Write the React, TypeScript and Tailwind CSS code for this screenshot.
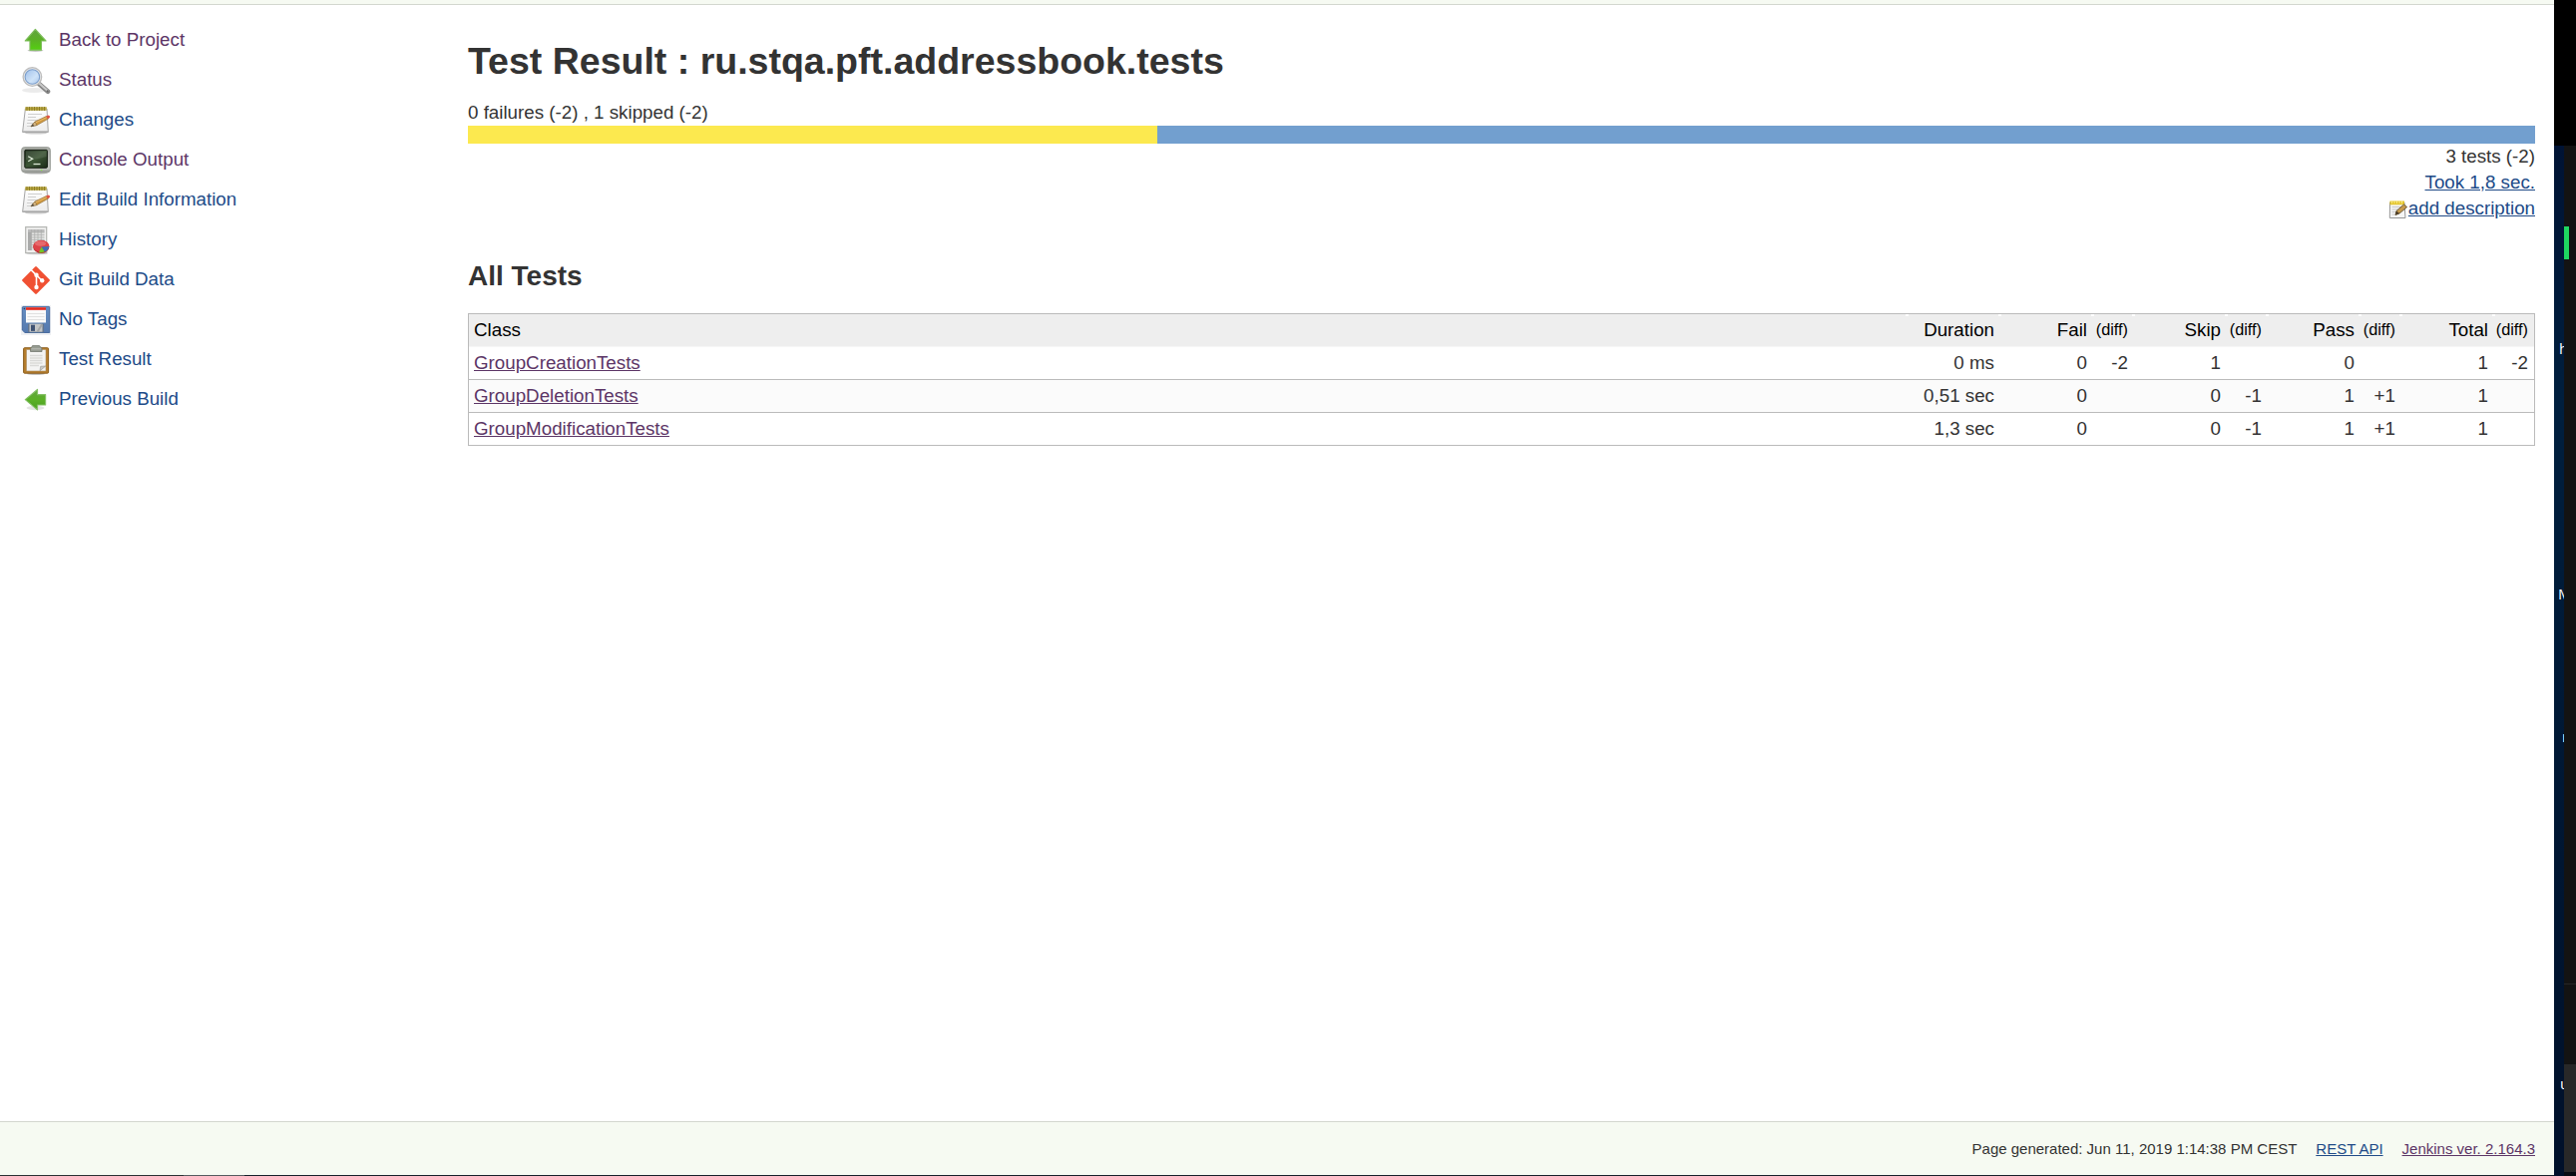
import React from "react";

function ArrowShape({ left = false }: { left?: boolean }) {
  return (
    <svg viewBox="0 0 30 30" className="block h-[30px] w-[30px]">
      <defs>
        <linearGradient id={left ? "gl" : "gu"} x1="0" y1="0" x2="0" y2="1">
          <stop offset="0" stopColor="#62a340" />
          <stop offset="0.5" stopColor="#5bb026" />
          <stop offset="1" stopColor={left ? "#4a9f22" : "#54d010"} />
        </linearGradient>
      </defs>
      <ellipse cx="14.5" cy={left ? 23 : 24.6} rx={left ? 9 : 8} ry={left ? 2.2 : 1.3} fill="#000" opacity={left ? 0.1 : 0.22} />
      {left ? (
        <path d="M4.3 14.6 L16.5 4.5 V9.6 H24.6 V20 H16.5 V24.9 Z" fill="url(#gl)" stroke="#86c167" strokeWidth="1.2" strokeLinejoin="round" />
      ) : (
        <path d="M14.4 3.4 L25 15 H20.4 V24.2 H9 V15 H4.3 Z" fill="url(#gu)" stroke="#7dbd5b" strokeWidth="1.2" strokeLinejoin="round" />
      )}
    </svg>
  );
}

function SearchIcon() {
  return (
    <svg viewBox="0 0 30 30" className="block h-[30px] w-[30px]">
      <defs>
        <linearGradient id="lens" x1="0" y1="0" x2="1" y2="1">
          <stop offset="0" stopColor="#9fc0ea" />
          <stop offset="0.6" stopColor="#cfe3f8" />
          <stop offset="1" stopColor="#a8c6ec" />
        </linearGradient>
      </defs>
      <ellipse cx="13" cy="24.5" rx="12" ry="2.4" fill="#000" opacity="0.08" />
      <path d="M17.5 17.5 L27 25.8" stroke="#868686" strokeWidth="4.6" strokeLinecap="round" />
      <path d="M18 17.2 L26.5 24.7" stroke="#c9c9c9" strokeWidth="2.2" strokeLinecap="round" />
      <circle cx="26.6" cy="25.3" r="1" fill="#666" />
      <circle cx="11.4" cy="11" r="9.3" fill="#e9e9e9" stroke="#bdbdbd" strokeWidth="1.3" />
      <circle cx="11.4" cy="11" r="7.3" fill="url(#lens)" stroke="#7c9fcc" strokeWidth="1.1" />
    </svg>
  );
}

function NotepadIcon() {
  return (
    <svg viewBox="0 0 30 30" className="block h-[30px] w-[30px]">
      <defs>
        <linearGradient id="pad" x1="0" y1="0" x2="0" y2="1">
          <stop offset="0" stopColor="#ffffff" />
          <stop offset="1" stopColor="#ececec" />
        </linearGradient>
      </defs>
      <ellipse cx="15" cy="27.4" rx="11" ry="1.2" fill="#000" opacity="0.2" />
      <path d="M4.4 3 H26 L27.3 26.5 H1.6 Z" fill="url(#pad)" stroke="#a5a5a5" strokeWidth="1" />
      <path d="M2 25.6 H27" stroke="#bdbdbd" strokeWidth="1" />
      <path d="M7 8.5 H21 M7 11.5 H15 M6.5 14.5 H17 M6 17.5 H12 M6 20.5 H11" stroke="#cfcfcf" strokeWidth="1.1" />
      <rect x="4.3" y="1.2" width="21.4" height="3.6" fill="#b8a53f" />
      <path d="M6 1 V5 M8.5 1 V5 M11 1 V5 M13.5 1 V5 M16 1 V5 M18.5 1 V5 M21 1 V5 M23.5 1 V5" stroke="#81731f" strokeWidth="0.8" />
      <path d="M10 20.8 L14 16 L25.4 10.6 L27.4 13.1 L16 19.5 Z" fill="#d19a3f" stroke="#87632c" strokeWidth="0.6" />
      <path d="M14.5 17 L26 11.5" stroke="#edc27a" strokeWidth="0.8" />
      <path d="M10 20.8 L14 16 L16 19.5 Z" fill="#d9b985" stroke="#77613c" strokeWidth="0.5" />
      <path d="M10 20.8 L12 18.3 L13 20.3 Z" fill="#444" />
      <path d="M25 10.4 L27.6 9.4 Q29.8 10.3 28.8 12 L27 13.2 Z" fill="#e05343" />
    </svg>
  );
}

function ConsoleIcon() {
  return (
    <svg viewBox="0 0 30 30" className="block h-[30px] w-[30px]">
      <defs>
        <linearGradient id="scr" x1="0" y1="0" x2="1" y2="1">
          <stop offset="0" stopColor="#20301e" />
          <stop offset="0.5" stopColor="#3c5535" />
          <stop offset="1" stopColor="#1c2b18" />
        </linearGradient>
        <linearGradient id="bez" x1="0" y1="0" x2="0" y2="1">
          <stop offset="0" stopColor="#a9aca6" />
          <stop offset="0.85" stopColor="#c8cac5" />
          <stop offset="1" stopColor="#858883" />
        </linearGradient>
      </defs>
      <ellipse cx="15" cy="27.3" rx="12" ry="1.2" fill="#000" opacity="0.3" />
      <rect x="0.6" y="1.6" width="28.8" height="25.2" rx="3" fill="url(#bez)" stroke="#959893" strokeWidth="0.9" />
      <rect x="3.8" y="4.3" width="22.6" height="18" rx="1" fill="url(#scr)" stroke="#141c12" strokeWidth="1" />
      <path d="M5 5.5 H25.5 V11 Q17 14 5 14 Z" fill="#fff" opacity="0.1" />
      <path d="M7.2 10.8 L11.6 13.2 L7.2 15.7" fill="none" stroke="#dbe8d5" strokeWidth="1.3" />
      <path d="M12.5 18.5 H19.5" stroke="#dbe8d5" strokeWidth="1.3" />
      <circle cx="20.6" cy="24.5" r="0.8" fill="#8ce54a" />
    </svg>
  );
}

function HistoryIcon() {
  return (
    <svg viewBox="0 0 30 30" className="block h-[30px] w-[30px]">
      <ellipse cx="16" cy="28" rx="11" ry="1.3" fill="#000" opacity="0.18" />
      <rect x="4.7" y="1.6" width="21" height="26" fill="#f0f0ef" stroke="#b4b6b2" strokeWidth="1.2" />
      <rect x="7" y="4" width="16.5" height="21" fill="#e2e2e1" />
      <rect x="7" y="4" width="3.5" height="21" fill="#aaa" />
      <rect x="7" y="4" width="16.5" height="3" fill="#bcbcbc" />
      <path d="M7 7 H23.5 M7 9.5 H23.5 M7 12 H23.5 M7 14.5 H23.5 M7 17 H23.5 M7 19.5 H23.5 M7 22 H23.5 M10.5 4 V25 M13.7 4 V25 M17 4 V25 M20.3 4 V25" stroke="#aaacab" strokeWidth="0.7" />
      <ellipse cx="20.3" cy="21.5" rx="8" ry="6.4" fill="#b32428" />
      <ellipse cx="20.3" cy="20.7" rx="8" ry="6" fill="#dd4348" />
      <ellipse cx="19.5" cy="18.2" rx="5.5" ry="2.6" fill="#ef8386" opacity="0.6" />
      <path d="M20.5 21.5 L28.2 21 Q28 25 23.5 26.6 Z" fill="#3f6eb4" />
      <path d="M20.5 21.5 L23.6 26.6 Q20.5 28 18 27 Z" fill="#74c425" />
    </svg>
  );
}

function GitIcon() {
  return (
    <svg viewBox="0 0 30 30" className="block h-[30px] w-[30px]">
      <rect x="4.8" y="4.8" width="20.4" height="20.4" rx="1.2" fill="#f05133" transform="rotate(45 15 15)" />
      <path d="M10.2 4.7 L15.5 9.8 V22 M15.5 9.8 L21 15.2" fill="none" stroke="#fff" strokeWidth="1.6" />
      <circle cx="15.5" cy="9.8" r="2.2" fill="#fff" />
      <circle cx="15.5" cy="22" r="2.2" fill="#fff" />
      <circle cx="21.2" cy="15.2" r="2.2" fill="#fff" />
    </svg>
  );
}

function FloppyIcon() {
  return (
    <svg viewBox="0 0 30 30" className="block h-[30px] w-[30px]">
      <defs>
        <linearGradient id="fl" x1="0" y1="0" x2="0" y2="1">
          <stop offset="0" stopColor="#668ec2" />
          <stop offset="1" stopColor="#5579ae" />
        </linearGradient>
      </defs>
      <rect width="30" height="30" fill="#eef0f3" />
      <path d="M2 1.4 H28 Q28.7 1.4 28.7 2.2 V27.5 H4 L1.3 25 V2 Z" fill="url(#fl)" stroke="#42659b" strokeWidth="0.9" />
      <rect x="5" y="2" width="20" height="15.5" fill="#fafafa" />
      <rect x="5" y="2.2" width="20" height="2.6" fill="#e3291c" />
      <path d="M6.5 8.5 H23.5 M6.5 11.5 H23.5 M6.5 14.5 H23.5" stroke="#dedede" strokeWidth="0.9" />
      <circle cx="3.4" cy="3.5" r="0.8" fill="#263c5f" />
      <rect x="7" y="18.7" width="16" height="8.6" fill="#62748d" />
      <rect x="8.5" y="18.7" width="13" height="8" fill="#c4c6c7" />
      <rect x="10" y="19.7" width="4" height="6.2" fill="#3f5273" />
      <path d="M16.5 26.7 L21 19.2" stroke="#a3a5a6" strokeWidth="2" />
    </svg>
  );
}

function ClipboardIcon() {
  return (
    <svg viewBox="0 0 30 30" className="block h-[30px] w-[30px]">
      <ellipse cx="15" cy="28.8" rx="9" ry="1" fill="#000" opacity="0.3" />
      <rect x="2.6" y="2.7" width="25" height="25.5" rx="1" fill="#b67d2c" stroke="#8d6022" strokeWidth="1" />
      <path d="M5.5 4.5 H25 V26 H5.5 Z" fill="#f4f4f3" stroke="#a98d62" strokeWidth="0.6" />
      <path d="M9 10.5 H21.5 M9 13 H21.5 M9 15.5 H21.5 M9 18 H21.5 M9 20.5 H18" stroke="#dadad8" strokeWidth="1.7" />
      <path d="M19 25.8 L19.7 21.2 L24.8 21 Z" fill="#c8c8c5" stroke="#898985" strokeWidth="0.5" />
      <path d="M9.5 6.5 V3.5 Q9.5 2 11 2 L11.5 0.6 H18.5 L19.5 2 Q21 2 21 3.5 V6.5 Z" fill="#979c92" stroke="#73786f" strokeWidth="0.8" />
      <path d="M10.5 3.8 H20" stroke="#babdb6" strokeWidth="1" />
    </svg>
  );
}

function SmallNoteIcon() {
  return (
    <svg viewBox="0 0 20 20" className="block h-5 w-5">
      <path d="M1.5 3 H16 L17 18.5 H1.3 Z" fill="#f5f5f5" stroke="#979797" strokeWidth="1" />
      <path d="M3.5 7.5 H13 M3.5 10 H10 M3.5 12.5 H8 M3.5 15 H7" stroke="#c9c9c9" />
      <rect x="1.5" y="1.5" width="14.5" height="3.8" fill="#e3c52d" />
      <path d="M3.5 1.3 V4 M6 1.3 V4 M8.5 1.3 V4 M11 1.3 V4 M13.5 1.3 V4" stroke="#fff3a1" strokeWidth="0.8" />
      <path d="M7 15.5 L8 11.5 L15.5 5 L18.6 7.6 L11 14 Z" fill="#c79a4b" stroke="#62502f" strokeWidth="0.9" />
      <path d="M7 15.5 L8 11.5 L11 14 Z" fill="#4a3b27" />
    </svg>
  );
}

const tasks = [
  { label: "Back to Project", icon: <ArrowShape />, visited: true },
  { label: "Status", icon: <SearchIcon />, visited: true },
  { label: "Changes", icon: <NotepadIcon />, visited: false },
  { label: "Console Output", icon: <ConsoleIcon />, visited: true },
  { label: "Edit Build Information", icon: <NotepadIcon />, visited: false },
  { label: "History", icon: <HistoryIcon />, visited: false },
  { label: "Git Build Data", icon: <GitIcon />, visited: false },
  { label: "No Tags", icon: <FloppyIcon />, visited: false },
  { label: "Test Result", icon: <ClipboardIcon />, visited: false },
  { label: "Previous Build", icon: <ArrowShape left />, visited: false },
];

const headers = ["Class", "Duration", "Fail", "(diff)", "Skip", "(diff)", "Pass", "(diff)", "Total", "(diff)"];

const rows = [
  ["GroupCreationTests", "0 ms", "0", "-2", "1", "", "0", "", "1", "-2"],
  ["GroupDeletionTests", "0,51 sec", "0", "", "0", "-1", "1", "+1", "1", ""],
  ["GroupModificationTests", "1,3 sec", "0", "", "0", "-1", "1", "+1", "1", ""],
];

const columns = "grid grid-cols-[1fr_93px_93px_41px_93px_41px_93px_41px_93px_40px]";

const notch =
  "relative before:absolute before:-left-[2px] before:top-0 before:h-[2px] before:w-[3px] before:bg-white before:content-['']";

function ResultsTable() {
  return (
    <div className="mt-5 border border-[#bbb] text-[#333]">
      <div className={`${columns} h-[33px] border-b border-[#f6f6f6] bg-[#eee] leading-[31px] text-black`}>
        {headers.map((h, i) => (
          <div
            key={i}
            className={
              i === 0
                ? "pl-[5px]"
                : h === "(diff)"
                  ? `${notch} pr-[6px] text-right text-[16.25px]`
                  : `${notch} pr-[6px] text-right`
            }
          >
            {h}
          </div>
        ))}
      </div>
      {rows.map((row, r) => (
        <div
          key={row[0]}
          className={`${columns} leading-[31px] ${r < 2 ? "h-[33px] border-b border-[#bbb]" : "h-[32px]"} ${r === 1 ? "bg-[#fbfbfb]" : ""}`}
        >
          {row.map((c, i) =>
            i === 0 ? (
              <div key={i} className="pl-[5px]">
                <a className="text-[#5c3566] underline">{c}</a>
              </div>
            ) : (
              <div key={i} className="pr-[6px] text-right">
                {c}
              </div>
            ),
          )}
        </div>
      ))}
    </div>
  );
}

function DesktopEdge() {
  return (
    <div className="flex h-[1179px] w-[22px] flex-col bg-[#02112a]">
      <div className="h-[146px] bg-black" />
      <div className="flex flex-1">
        <div className="relative w-[10px] overflow-hidden bg-linear-to-b from-[#001334] via-[#001f3e] via-25% to-[#00102a] font-['Open_Sans',sans-serif] text-[15px] leading-[20px] text-white">
          <span className="absolute left-[5px] top-[193px]">h</span>
          <span className="absolute left-[4px] top-[439px]">M</span>
          <span className="absolute left-[8px] top-[582px]">r</span>
          <span className="absolute left-[6px] top-[930px]">u</span>
        </div>
        <div className="flex w-[12px] flex-col bg-[#131313]">
          <div className="mt-[81px] h-[33px] w-[5px] bg-[#1ed760]" />
          <div className="mt-[726px] h-px bg-[#282828]" />
          <div className="mt-20 h-[108px] bg-[#282828]" />
          <div className="flex-1 bg-[#070b12]" />
        </div>
      </div>
    </div>
  );
}

export default function App() {
  return (
    <div className="flex h-[1179px] w-[2582px] overflow-hidden bg-white font-['Liberation_Sans',Arial,sans-serif] text-[18.75px] text-[#333]">
      <div className="flex w-[2560px] flex-col">
        <div className="h-[5px] border-b border-[#d3d7cf] bg-[#f6faf2]" />
        <div className="flex flex-1">
          <nav className="w-[469px] pl-[21px] pt-[21px]">
            {tasks.map((t) => (
              <div key={t.label} className="flex h-10 items-start">
                {t.icon}
                <a className={`ml-2 leading-[28px] ${t.visited ? "text-[#5c3566]" : "text-[#204a87]"}`}>{t.label}</a>
              </div>
            ))}
          </nav>
          <main className="w-[2072px]">
            <h1 className="mt-[33px] text-[37.5px] font-bold leading-[46px]">Test Result : ru.stqa.pft.addressbook.tests</h1>
            <div className="mt-[16px] leading-[26px]">0 failures (-2) , 1 skipped (-2)</div>
            <div className="flex h-[18px]">
              <div className="w-[691px] bg-[#fce94f]" />
              <div className="flex-1 bg-[#729fcf]" />
            </div>
            <div className="flex flex-col items-end leading-[26px]">
              <div>3 tests (-2)</div>
              <a className="text-[#204a87] underline">Took 1,8 sec.</a>
              <div className="flex">
                <div className="pt-1">
                  <SmallNoteIcon />
                </div>
                <a className="text-[#204a87] underline">add description</a>
              </div>
            </div>
            <h2 className="mt-[38px] text-[28px] font-bold leading-[34px]">All Tests</h2>
            <ResultsTable />
          </main>
        </div>
        <footer className="flex h-[54px] items-center justify-end border-t border-[#d3d7cf] bg-[#f6faf2] pr-[19px] pt-[2px] text-[15px]">
          <span>Page generated: Jun 11, 2019 1:14:38 PM CEST</span>
          <a className="ml-[19px] text-[#204a87] underline">REST API</a>
          <a className="ml-[19px] text-[#5c3566] underline">Jenkins ver. 2.164.3</a>
        </footer>
        <div className="flex h-px bg-[#17202a]">
          <div className="w-[184px] bg-[#2b3133]" />
          <div className="w-[61px] bg-[#555b5f]" />
        </div>
      </div>
      <DesktopEdge />
    </div>
  );
}
